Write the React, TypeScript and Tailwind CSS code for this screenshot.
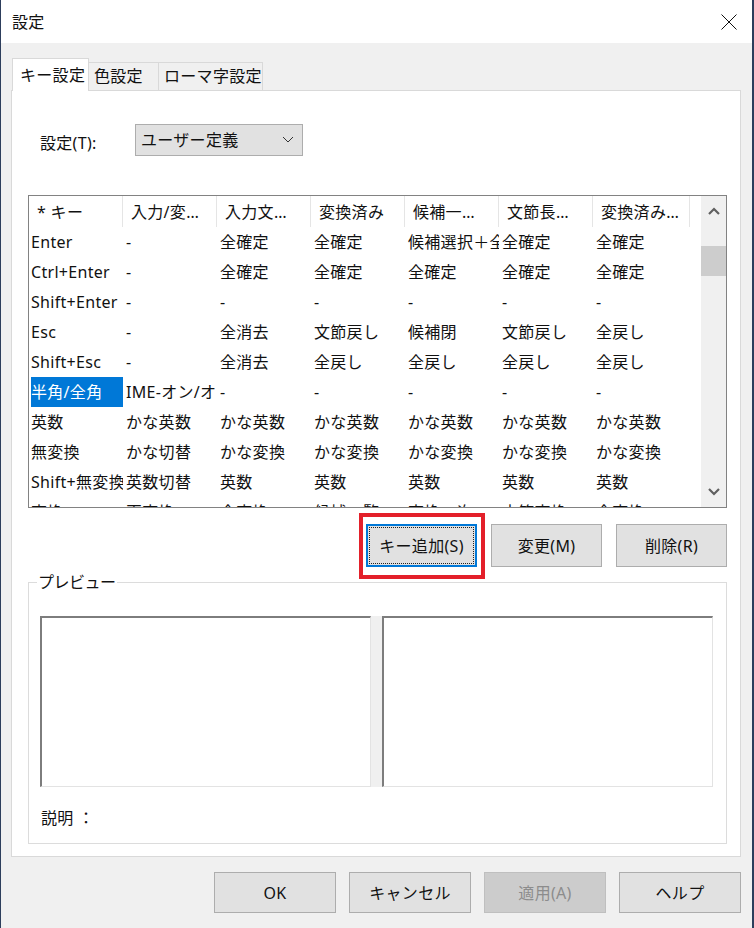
import React from 'react';

const COL_WIDTHS = [94, 94, 94, 94, 94, 94, 97];

const HEADERS = ['* キー', '入力/変…', '入力文…', '変換済み', '候補一…', '文節長…', '変換済み…'];

const ROWS: string[][] = [
  ['Enter', '-', '全確定', '全確定', '候補選択＋全確定', '全確定', '全確定'],
  ['Ctrl+Enter', '-', '全確定', '全確定', '全確定', '全確定', '全確定'],
  ['Shift+Enter', '-', '-', '-', '-', '-', '-'],
  ['Esc', '-', '全消去', '文節戻し', '候補閉', '文節戻し', '全戻し'],
  ['Shift+Esc', '-', '全消去', '全戻し', '全戻し', '全戻し', '全戻し'],
  ['半角/全角', 'IME-オン/オフ', '-', '-', '-', '-', '-'],
  ['英数', 'かな英数', 'かな英数', 'かな英数', 'かな英数', 'かな英数', 'かな英数'],
  ['無変換', 'かな切替', 'かな変換', 'かな変換', 'かな変換', 'かな変換', 'かな変換'],
  ['Shift+無変換', '英数切替', '英数', '英数', '英数', '英数', '英数'],
  ['変換', '再変換', '全変換', '候補一覧', '変換・次', '文節変換', '全変換'],
];

const Chevron = ({ up = false, heavy = false, className = '' }: { up?: boolean; heavy?: boolean; className?: string }) => (
  <svg width="12" height="8" viewBox="0 0 12 8" className={className}>
    <polyline
      points={up ? '1,7 6,2 11,7' : '1,1 6,6 11,1'}
      fill="none"
      stroke="currentColor"
      strokeWidth={heavy ? 2.2 : 1}
    />
  </svg>
);

const Button = ({ label, disabled = false, className = '' }: { label: string; disabled?: boolean; className?: string }) => (
  <button
    className={`flex items-center justify-center border text-[16px] ${
      disabled ? 'bg-[#cccccc] border-[#bfbfbf] text-[#8c8c8c]' : 'bg-[#e1e1e1] border-[#adadad] text-[#111]'
    } ${className}`}
  >
    {label}
  </button>
);

export default function App() {
  return (
    <div className="w-[754px] h-[928px] flex flex-col bg-[#f0f0f0] border-l border-r-2 border-[#2d3e5c] font-['Noto_Sans','Noto_Sans_CJK_JP',sans-serif] tracking-[0.3px] text-[#111] overflow-hidden">
      {/* title bar */}
      <div className="h-[43px] shrink-0 bg-white flex items-center justify-between pl-[11px] pr-[15px]">
        <span className="text-[16px] leading-none">設定</span>
        <svg width="16" height="16" viewBox="0 0 16 16">
          <path d="M0.5 0.5 L15.5 15.5 M15.5 0.5 L0.5 15.5" stroke="#111" strokeWidth="1" />
        </svg>
      </div>

      <div className="flex-1 flex flex-col pl-[10px] pr-[11px] pt-[15px]">
        {/* tabs */}
        <div className="flex items-end h-[33px] -mb-px relative z-10">
          <div className="h-[33px] w-[77px] ml-px bg-white border border-b-0 border-[#d9d9d9] flex items-center pl-[7px] text-[16px]">
            キー設定
          </div>
          <div className="h-[29px] w-[70px] border border-l-0 border-[#d9d9d9] flex items-center pl-[5px] text-[16px] pb-[1px]">
            色設定
          </div>
          <div className="h-[29px] w-[104px] border border-l-0 border-[#d9d9d9] flex items-center pl-[5px] text-[16px] pb-[1px]">
            ローマ字設定
          </div>
        </div>

        {/* tab panel */}
        <div className="h-[767px] bg-white border border-[#d9d9d9] flex flex-col pl-[16px] pr-[13px]">
          <div className="mt-[33px] h-[32px] flex items-center">
            <span className="ml-[12px] w-[95px] text-[16px] pt-[6px]">設定(T):</span>
            <div className="w-[168px] h-[32px] bg-[#e1e1e1] border border-[#adadad] flex items-center justify-between pl-[5px] pr-[8px] text-[16px]">
              <span>ユーザー定義</span>
              <Chevron className="text-[#333]" />
            </div>
          </div>

          {/* list view */}
          <div className="mt-[39px] h-[313px] border border-[#828282] flex overflow-hidden">
            <div className="flex-1 overflow-hidden text-[16px]">
              <div className="h-[31px] flex items-center">
                {HEADERS.map((h, i) => (
                  <div
                    key={h}
                    style={{ width: COL_WIDTHS[i] }}
                    className="h-full shrink-0 flex items-center pl-[8px] border-r border-[#e5e5e5] whitespace-nowrap overflow-hidden"
                  >
                    {h}
                  </div>
                ))}
              </div>
              {ROWS.map((row, r) => (
                <div key={r} className="h-[30px] flex">
                  {row.map((cell, c) => {
                    const selected = r === 5 && c === 0;
                    return (
                      <div
                        key={c}
                        style={{ width: COL_WIDTHS[c] }}
                        className={`h-full shrink-0 flex items-center whitespace-nowrap overflow-hidden ${
                          c === 0 ? 'pl-[2px]' : 'pl-[3px]'
                        }`}
                      >
                        {selected ? (
                          <span className="h-full w-full flex items-center bg-[#0078d7] text-white">{cell}</span>
                        ) : (
                          cell
                        )}
                      </div>
                    );
                  })}
                </div>
              ))}
            </div>
            {/* scrollbar */}
            <div className="w-[25px] shrink-0 bg-[#f0f0f0] flex flex-col items-center">
              <div className="h-[30px] w-full flex items-center justify-center text-[#606060]">
                <Chevron up heavy />
              </div>
              <div className="mt-[20px] h-[30px] w-full bg-[#cdcdcd]" />
              <div className="flex-1" />
              <div className="h-[30px] w-full flex items-center justify-center text-[#606060]">
                <Chevron heavy />
              </div>
            </div>
          </div>

          {/* action buttons */}
          <div className="mt-[16px] h-[43px] flex justify-end gap-[14px]">
            <div className="relative w-[111px] h-[43px]">
              <div className="absolute -left-[7px] -top-[11px] -right-[8px] -bottom-[12px] border-[4px] border-[#e3202a] pointer-events-none" />
              <button className="w-full h-full bg-[#e1e1e1] border-2 border-[#0078d7] p-[1px]">
                <span className="w-full h-full flex items-center justify-center border border-dotted border-[#222] text-[16px]">
                  キー追加(S)
                </span>
              </button>
            </div>
            <Button label="変更(M)" className="w-[111px] h-[43px]" />
            <Button label="削除(R)" className="w-[111px] h-[43px]" />
          </div>

          {/* preview group */}
          <fieldset className="mt-[5px] border border-[#dcdcdc] pl-[11px] pr-[13px] pb-[15px]">
            <legend className="-ml-[3px] px-[1px] text-[16px] leading-[20px] tracking-[-0.5px]">プレビュー</legend>
            <div className="mt-[24px] flex h-[171px]">
              <div className="w-[331px] h-full bg-white border-t-2 border-l-2 border-[#7d7d7d] border-b border-r border-b-[#e3e3e3] border-r-[#e3e3e3]" />
              <div className="w-[11px] h-full bg-[#f0f0f0]" />
              <div className="w-[331px] h-full bg-white border-t-2 border-l-2 border-[#7d7d7d] border-b border-r border-b-[#e3e3e3] border-r-[#e3e3e3]" />
            </div>
            <div className="mt-[21px] pl-[1px] h-[20px] flex items-center text-[16px]">説明 ：</div>
          </fieldset>
        </div>

        {/* dialog buttons */}
        <div className="mt-[15px] h-[41px] flex justify-end gap-[13px]">
          <Button label="OK" className="w-[122px] h-[41px]" />
          <Button label="キャンセル" className="w-[122px] h-[41px]" />
          <Button label="適用(A)" disabled className="w-[122px] h-[41px]" />
          <Button label="ヘルプ" className="w-[122px] h-[41px]" />
        </div>
      </div>
    </div>
  );
}
